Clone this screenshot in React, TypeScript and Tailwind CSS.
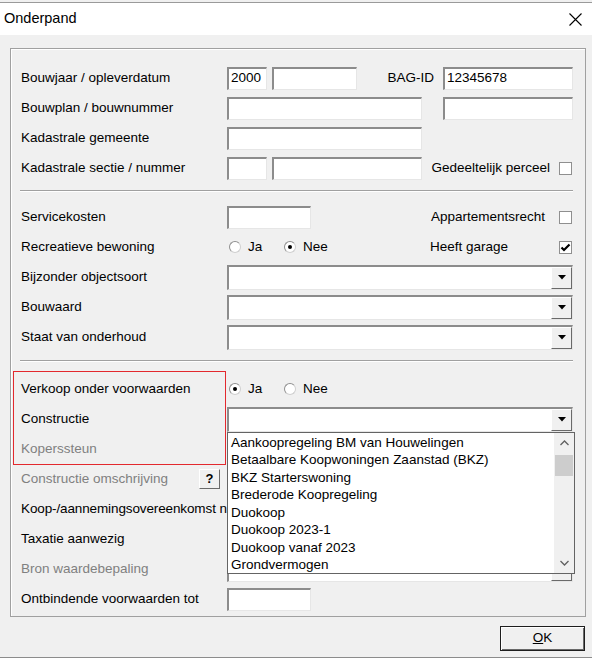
import type { ReactNode } from 'react';

const items = [
  'Aankoopregeling BM van Houwelingen',
  'Betaalbare Koopwoningen Zaanstad (BKZ)',
  'BKZ Starterswoning',
  'Brederode Koopregeling',
  'Duokoop',
  'Duokoop 2023-1',
  'Duokoop vanaf 2023',
  'Grondvermogen',
];

function TextBox({ className = '', value = '' }: { className?: string; value?: string }) {
  return (
    <div
      className={`flex h-[23px] items-center overflow-hidden whitespace-nowrap border-t-2 border-l-2 border-b border-r border-t-[#8c8c8c] border-l-[#8c8c8c] border-b-[#e6e6e6] border-r-[#e6e6e6] bg-white pl-[2px] text-[13.5px] text-black ${className}`}
    >
      {value}
    </div>
  );
}

function Combo() {
  return (
    <div className="flex h-[25px] w-full border-t-2 border-l-2 border-b border-r border-t-[#8c8c8c] border-l-[#8c8c8c] border-b-[#e6e6e6] border-r-[#e6e6e6] bg-white">
      <div className="flex-1" />
      <div className="flex h-full w-[21px] items-center justify-center border border-[#6a6a6a] border-t-white border-l-white bg-[#f0f0f0]">
        <svg width="8" height="5" viewBox="0 0 8 5">
          <polygon points="0,0 8,0 4,4.5" fill="#000" />
        </svg>
      </div>
    </div>
  );
}

function Check({ checked = false }: { checked?: boolean }) {
  return (
    <span className="mr-[1px] flex h-[13px] w-[13px] shrink-0 items-center justify-center border border-[#8f8f8f] bg-white">
      {checked && (
        <svg width="11" height="11" viewBox="0 0 11 11">
          <polyline points="1.5,5.5 4,8 9.5,2.5" fill="none" stroke="#000" strokeWidth="2.2" />
        </svg>
      )}
    </span>
  );
}

function Radio({ checked = false, label }: { checked?: boolean; label: string }) {
  return (
    <span className="flex w-[55px] items-center gap-[7px]">
      <span className="flex h-[12px] w-[12px] items-center justify-center rounded-full border border-[#8f8f8f] border-r-[#cfcfcf] border-b-[#cfcfcf] bg-white">
        {checked && <span className="h-[4px] w-[4px] rounded-full bg-black" />}
      </span>
      <span>{label}</span>
    </span>
  );
}

function Row({
  label,
  gray = false,
  labelClass = '',
  extra,
  children,
}: {
  label: string;
  gray?: boolean;
  labelClass?: string;
  extra?: ReactNode;
  children?: ReactNode;
}) {
  return (
    <div className="flex h-[30px] items-center">
      <div className={`flex w-[206px] shrink-0 items-center whitespace-nowrap ${gray ? 'text-[#808080]' : 'text-black'}`}>
        <span className={labelClass}>{label}</span>
        {extra}
      </div>
      <div className="flex flex-1 items-center">{children}</div>
    </div>
  );
}

function Separator() {
  return <div className="ml-[9px] h-[2px] border-t border-b border-t-[#a0a0a0] border-b-white" />;
}

function Chevron({ up }: { up?: boolean }) {
  return (
    <svg width="9" height="6" viewBox="0 0 9 6">
      <polyline points={up ? '0.5,5 4.5,1 8.5,5' : '0.5,1 4.5,5 8.5,1'} fill="none" stroke="#606060" strokeWidth="1.3" />
    </svg>
  );
}

function DropList() {
  return (
    <div className="absolute left-0 top-full z-10 flex h-[142px] w-[348px] border border-[#646464] bg-white">
      <div className="flex-1 overflow-hidden pl-[3px] pt-[1px]">
        {items.map((it) => (
          <div key={it} className="h-[17.5px] whitespace-nowrap leading-[17.5px] text-black">
            {it}
          </div>
        ))}
      </div>
      <div className="flex w-[20px] flex-col items-center bg-[#f0f0f0]">
        <div className="flex h-[20px] items-center justify-center">
          <Chevron up />
        </div>
        <div className="mt-[2px] h-[21px] w-[18px] bg-[#cdcdcd]" />
        <div className="flex-1" />
        <div className="flex h-[20px] items-center justify-center">
          <Chevron />
        </div>
      </div>
    </div>
  );
}

export default function App() {
  return (
    <div className="flex h-[658px] w-[592px] flex-col border-b border-[#8c8c8c] bg-[#f0f0f0] font-['Liberation_Sans',Arial,sans-serif] text-[13.5px] text-black">
      <div className="mt-[2px] flex h-[33px] shrink-0 items-center justify-between border-t border-[#9a9a9a] bg-white pl-[4px] pr-[10px]">
        <span className="text-[14.5px]">Onderpand</span>
        <svg width="13" height="13" viewBox="0 0 13 13">
          <path d="M0.5 0.5 L12.5 12.5 M12.5 0.5 L0.5 12.5" stroke="#000" strokeWidth="1.1" />
        </svg>
      </div>

      <div className="ml-[10px] mt-[13px] w-[576px] border border-[#a0a0a0] pb-[2px] pl-[10px] pr-[12px] pt-[14px] shadow-[inset_1px_1px_0_#fff]">
        <div>
          <Row label="Bouwjaar / opleverdatum">
            <TextBox className="w-[40px]" value="2000" />
            <TextBox className="ml-[5px] w-[85px]" />
            <span className="ml-auto mr-[9px]">BAG-ID</span>
            <TextBox className="w-[130px]" value="12345678" />
          </Row>
          <Row label="Bouwplan / bouwnummer">
            <TextBox className="w-[195px]" />
            <TextBox className="ml-auto w-[130px]" />
          </Row>
          <Row label="Kadastrale gemeente">
            <TextBox className="w-[195px]" />
          </Row>
          <Row label="Kadastrale sectie / nummer">
            <TextBox className="w-[40px]" />
            <TextBox className="ml-[5px] w-[150px]" />
            <span className="ml-auto mr-[9px]">Gedeeltelijk perceel</span>
            <Check />
          </Row>
        </div>

        <div className="-ml-[10px] mt-[7px]">
          <Separator />
        </div>

        <div className="mt-[10px]">
          <Row label="Servicekosten">
            <TextBox className="w-[84px]" />
            <span className="ml-auto mr-[14px]">Appartementsrecht</span>
            <Check />
          </Row>
          <Row label="Recreatieve bewoning">
            <span className="ml-[2px] flex items-center">
              <Radio label="Ja" />
              <Radio label="Nee" checked />
            </span>
            <span className="ml-auto mr-[14px] w-[115px]">Heeft garage</span>
            <Check checked />
          </Row>
          <Row label="Bijzonder objectsoort">
            <Combo />
          </Row>
          <Row label="Bouwaard">
            <Combo />
          </Row>
          <Row label="Staat van onderhoud">
            <Combo />
          </Row>
        </div>

        <div className="-ml-[10px] mt-[8px]">
          <Separator />
        </div>

        <div className="relative -ml-[10px] mt-[12px] pl-[10px]">
          <Row label="Verkoop onder voorwaarden">
            <span className="ml-[2px] flex items-center">
              <Radio label="Ja" checked />
              <Radio label="Nee" />
            </span>
          </Row>
          <Row label="Constructie">
            <div className="relative w-full">
              <Combo />
              <DropList />
            </div>
          </Row>
          <Row label="Koperssteun" gray />
          <Row
            label="Constructie omschrijving"
            gray
            extra={
              <span className="ml-auto mr-[7px] flex h-[20px] w-[21px] items-center justify-center border border-[#6a6a6a] border-t-white border-l-white bg-[#f0f0f0] text-[13px] font-bold text-black">
                ?
              </span>
            }
          />
          <Row label="Koop-/aannemingsovereenkomst n" labelClass="tracking-[-0.12px]" />
          <Row label="Taxatie aanwezig" />
          <Row label="Bron waardebepaling" gray>
            <Combo />
          </Row>
          <Row label="Ontbindende voorwaarden tot">
            <TextBox className="w-[84px]" />
          </Row>
          <div className="pointer-events-none absolute left-[2px] top-[-3px] h-[94px] w-[213px] border border-[#e3292e]" />
        </div>
      </div>

      <div className="mr-[7px] mt-[9px] flex h-[25px] w-[85px] items-center justify-center self-end border border-[#1e1e1e] bg-[#f0f0f0] shadow-[inset_1px_1px_0_#fff,inset_-1px_-1px_0_#696969]">
        <span>
          <span className="underline">O</span>K
        </span>
      </div>
    </div>
  );
}
